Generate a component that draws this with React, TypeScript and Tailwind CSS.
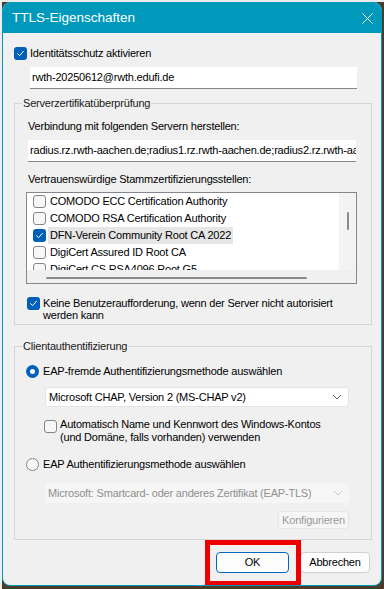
import React from "react";

const CERTS = [
  { name: "COMODO ECC Certification Authority", checked: false },
  { name: "COMODO RSA Certification Authority", checked: false },
  { name: "DFN-Verein Community Root CA 2022", checked: true, selected: true },
  { name: "DigiCert Assured ID Root CA", checked: false },
  { name: "DigiCert CS RSA4096 Root G5", checked: false },
];

function CheckBox({ checked }: { checked?: boolean }) {
  if (checked) {
    return (
      <span className="flex h-[13px] w-[13px] shrink-0 items-center justify-center rounded-[3px] bg-[#005fb8]">
        <svg width="9" height="9" viewBox="0 0 9 9" fill="none">
          <path d="M1.6 4.7 L3.6 6.6 L7.4 2.3" stroke="white" strokeWidth="1" strokeLinecap="round" strokeLinejoin="round" />
        </svg>
      </span>
    );
  }
  return <span className="block h-[13px] w-[13px] shrink-0 rounded-[3px] border border-[#858585] bg-[#f7f7f7]" />;
}

function Radio({ checked }: { checked?: boolean }) {
  if (checked) {
    return (
      <span className="flex h-[13px] w-[13px] shrink-0 items-center justify-center rounded-full bg-[#005fb8]">
        <span className="h-[5px] w-[5px] rounded-full bg-white" />
      </span>
    );
  }
  return <span className="block h-[13px] w-[13px] shrink-0 rounded-full border border-[#858585] bg-[#f7f7f7]" />;
}

function Chevron({ color }: { color: string }) {
  return (
    <svg width="10" height="6" viewBox="0 0 10 6" fill="none">
      <path d="M1 1 L5 5 L9 1" stroke={color} strokeWidth="1" />
    </svg>
  );
}

function Select({ text, disabled }: { text: string; disabled?: boolean }) {
  return (
    <div
      className={`ml-[19px] flex h-[20px] w-[304px] items-center justify-between rounded-[3px] pl-[3px] pr-[6px] ${
        disabled ? "bg-[#f6f6f6] text-[#8f8f8f]" : "border border-[#e3e3e3] bg-white text-black"
      }`}
    >
      <span className="truncate">{text}</span>
      <Chevron color={disabled ? "#c4c4c4" : "#606060"} />
    </div>
  );
}

export default function App() {
  return (
    <div className="h-[589px] w-[384px] overflow-hidden border-l-2 border-t-2 border-[#ededed] bg-[#4a3b2b] font-['Liberation_Sans',Arial,sans-serif] text-[11px] tracking-[-0.2px] text-black">
      <div className="relative flex h-[584px] w-[380px] flex-col overflow-hidden rounded-[8px] border border-[#0099bc] bg-[#f0f0f0]">
        {/* title bar */}
        <div className="flex h-[30px] shrink-0 items-center justify-between bg-[#0099bc] pl-[9px] pr-[8px]">
          <span className="text-[13.5px] tracking-normal text-white">TTLS-Eigenschaften</span>
          <svg width="11" height="11" viewBox="0 0 11 11" fill="none">
            <path d="M0.5 0.5 L10.5 10.5 M10.5 0.5 L0.5 10.5" stroke="white" strokeWidth="1" />
          </svg>
        </div>

        <div className="flex flex-col pl-[11px] pr-[9px]">
          <div className="mt-[12px] flex h-[16px] items-center gap-[3px]">
            <CheckBox checked />
            <span>Identitätsschutz aktivieren</span>
          </div>
          <div className="ml-[16px] mt-[6px] flex h-[22px] w-[327px] items-center border-b border-[#868686] bg-white pl-[2px]">
            rwth-20250612@rwth.edufi.de
          </div>

          {/* server certificate group */}
          <fieldset className="mt-[7px] border border-[#d6d6d6] pb-[3px] pl-[11px] pr-[13px]">
            <legend className="ml-[-4px] px-[1px] leading-[14px] text-[#1a1a1a]">Serverzertifikatüberprüfung</legend>
            <div className="ml-[2px] mt-[9px] leading-[14px]">Verbindung mit folgenden Servern herstellen:</div>
            <div className="ml-[2px] mt-[7px] flex h-[22px] w-[328px] items-center overflow-hidden whitespace-nowrap border-b border-[#868686] bg-white pl-[2px]">
              radius.rz.rwth-aachen.de;radius1.rz.rwth-aachen.de;radius2.rz.rwth-aachen.de
            </div>
            <div className="ml-[2px] mt-[10px] leading-[14px]">Vertrauenswürdige Stammzertifizierungsstellen:</div>

            {/* list box */}
            <div className="mt-[6px] grid h-[92px] w-[331px] grid-cols-[1fr_17px] grid-rows-[1fr_13px] border border-[#82878f] bg-[#f0f0f0]">
              <div className="overflow-hidden bg-white pl-[6px]">
                {CERTS.map((c) => (
                  <div key={c.name} className="flex h-[17px] items-center gap-[2px] whitespace-nowrap">
                    <CheckBox checked={c.checked} />
                    <span className={`px-[2px] leading-[17px] ${c.selected ? "bg-[#e6e6e6]" : ""}`}>{c.name}</span>
                  </div>
                ))}
              </div>
              <div className="flex justify-center bg-[#f3f3f3] pt-[19px]">
                <div className="h-[18px] w-[2px] rounded-full bg-[#8a8a8a]" />
              </div>
              <div className="pl-[19px] pt-[7px]">
                <div className="h-[2px] w-[261px] rounded-full bg-[#8a8a8a]" />
              </div>
              <div />
            </div>

            <div className="ml-[1px] mt-[13px] flex gap-[3px] leading-[12px]">
              <CheckBox checked />
              <span>
                Keine Benutzeraufforderung, wenn der Server nicht autorisiert
                <br />
                werden kann
              </span>
            </div>
          </fieldset>

          {/* client auth group */}
          <fieldset className="mt-[14px] border border-[#d6d6d6] pb-[10px] pl-[11px] pr-[13px]">
            <legend className="ml-[-4px] px-[1px] leading-[14px] text-[#1a1a1a]">Clientauthentifizierung</legend>
            <div className="mt-[11px] flex h-[14px] items-center gap-[4px]">
              <Radio checked />
              <span>EAP-fremde Authentifizierungsmethode auswählen</span>
            </div>
            <div className="mt-[9px]">
              <Select text="Microsoft CHAP, Version 2 (MS-CHAP v2)" />
            </div>
            <div className="ml-[18px] mt-[11px] flex gap-[3px] leading-[13px]">
              <div className="mt-[2px] shrink-0">
                <CheckBox />
              </div>
              <span>
                Automatisch Name und Kennwort des Windows-Kontos
                <br />
                (und Domäne, falls vorhanden) verwenden
              </span>
            </div>
            <div className="mt-[13px] flex h-[14px] items-center gap-[4px]">
              <Radio />
              <span>EAP Authentifizierungsmethode auswählen</span>
            </div>
            <div className="mt-[12px]">
              <Select text="Microsoft: Smartcard- oder anderes Zertifikat (EAP-TLS)" disabled />
            </div>
            <div className="ml-[19px] mt-[8px] flex w-[304px] justify-end">
              <div className="flex h-[18px] w-[71px] items-center justify-center rounded-[3px] border border-[#e6e6e6] bg-[#f6f6f6] text-[#9a9a9a]">
                Konfigurieren
              </div>
            </div>
          </fieldset>

          {/* dialog buttons */}
          <div className="mr-[2px] mt-[12px] flex justify-end gap-[11px]">
            <div className="flex h-[21px] w-[73px] items-center justify-center rounded-[4px] border border-[#0067c0] bg-[#fdfdfd]">
              OK
            </div>
            <div className="flex h-[21px] w-[70px] items-center justify-center rounded-[4px] border border-[#d0d0d0] bg-[#fdfdfd]">
              Abbrechen
            </div>
          </div>
        </div>

        {/* red annotation frame */}
        <div className="absolute left-[202px] top-[537px] h-[46px] w-[96px] border-[5px] border-[#ee0000]" />
      </div>
    </div>
  );
}
